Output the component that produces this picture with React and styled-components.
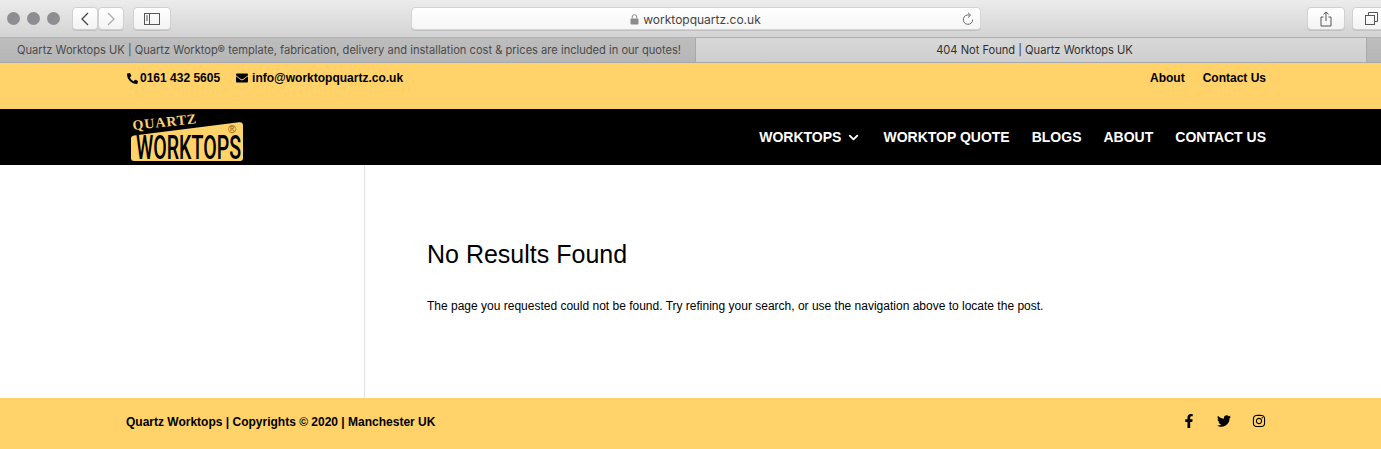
import styled, { createGlobalStyle } from "styled-components";
import { FaPhoneAlt, FaEnvelope, FaFacebookF, FaTwitter, FaInstagram } from "react-icons/fa";
import { FiChevronDown } from "react-icons/fi";

const GlobalStyle = createGlobalStyle`
  html, body {
    margin: 0;
    padding: 0;
    background: #fff;
    overflow: hidden;
    font-family: "Liberation Sans", Arial, sans-serif;
  }
`;

const Page = styled.div`
  width: 1381px;
  height: 449px;
  display: flex;
  flex-direction: column;
  overflow: hidden;
`;

const Toolbar = styled.div`
  height: 38px;
  flex: none;
  box-sizing: border-box;
  display: flex;
  align-items: center;
  padding: 0 0 0 7px;
  background: linear-gradient(#ececec, #d3d3d3);
  border-bottom: 1px solid #b1b1b1;
`;

const Lights = styled.div`
  display: flex;
  gap: 7px;
  margin-right: 12px;
`;

const Light = styled.span`
  width: 13px;
  height: 13px;
  border-radius: 50%;
  background: #8e8d92;
`;

const ToolButton = styled.button`
  width: ${(p) => p.$width}px;
  height: 23px;
  margin: 0 0 0 ${(p) => p.$gap || 0}px;
  padding: 0;
  flex: none;
  display: flex;
  align-items: center;
  justify-content: center;
  background: linear-gradient(#ffffff, #f3f3f3);
  border: 1px solid #d0d0d0;
  border-radius: 4px;
  box-shadow: 0 1px 0 #c0c0c0;
  color: #555;
`;

const AddressBar = styled.div`
  width: 570px;
  height: 23px;
  flex: none;
  margin-left: 240px;
  box-sizing: border-box;
  padding: 0 6px 0 0;
  display: grid;
  grid-template-columns: 1fr auto 1fr;
  align-items: center;
  background: linear-gradient(#ffffff, #f6f6f6);
  border: 1px solid #d4d4d4;
  border-radius: 4px;
  box-shadow: 0 1px 0 #c0c0c0;
`;

const Address = styled.span`
  grid-column: 2;
  display: flex;
  align-items: center;
  gap: 4px;
  padding: 2px 0 0 5px;
  font-family: "Inter", "Liberation Sans", sans-serif;
  font-size: 12px;
  color: #444;
`;

const Reload = styled.span`
  justify-self: end;
  display: flex;
`;

const TabBar = styled.div`
  height: 25px;
  flex: none;
  box-sizing: border-box;
  display: flex;
  border-bottom: 1px solid #a9a9a9;
  font-family: "Inter", "Liberation Sans", sans-serif;
  font-size: 11.12px;
`;

const Tab = styled.div`
  flex: 0 0 695px;
  box-sizing: border-box;
  display: flex;
  align-items: center;
  padding-left: 17px;
  white-space: nowrap;
  overflow: hidden;
  color: #4a4a4a;
  background: linear-gradient(#bdbdbd, #b6b6b6);
`;

const ActiveTab = styled(Tab)`
  flex: 0 0 672px;
  justify-content: center;
  padding-left: 7px;
  color: #303030;
  background: linear-gradient(#d8d8d8, #cfcfcf);
  border-left: 1px solid #a9a9a9;
  border-right: 1px solid #a9a9a9;
`;

const NewTab = styled(Tab)`
  flex: 1;
  padding: 0;
`;

const Inner = styled.div`
  width: 1140px;
  margin-left: 126px;
  display: flex;
  justify-content: space-between;
`;

const TopBar = styled.div`
  height: 46px;
  flex: none;
  box-sizing: border-box;
  padding-top: 8px;
  background: #ffd36a;
  color: #000;
  font-size: 12px;
  font-weight: 700;
`;

const Contacts = styled.div`
  display: flex;
  gap: 16px;
  padding-left: 1px;
`;

const ContactItem = styled.span`
  display: flex;
  align-items: center;
  gap: ${(p) => p.$gap}px;
  line-height: 15px;
`;

const MailIcon = styled(FaEnvelope)`
  margin-bottom: 2px;
`;

const TopLinks = styled.div`
  display: flex;
  gap: 18px;
  line-height: 14px;
`;

const Header = styled.header`
  height: 56px;
  flex: none;
  background: #000;
`;

const HeaderInner = styled(Inner)`
  height: 56px;
  align-items: center;
`;

const LogoMark = styled.svg`
  display: block;
  margin-left: 4px;
  overflow: visible;
`;

const Nav = styled.nav`
  display: flex;
  gap: 22px;
  color: #fff;
  font-size: 14px;
  font-weight: 700;
`;

const NavItem = styled.span`
  display: flex;
  align-items: center;
  gap: ${(p) => p.$gap || 0}px;
  white-space: nowrap;
`;

const Main = styled.main`
  flex: 1;
  display: flex;
  margin-left: 126px;
`;

const Sidebar = styled.aside`
  width: 239px;
  flex: none;
  box-sizing: border-box;
  border-right: 1px solid #e2e2e2;
`;

const Content = styled.section`
  padding: 73px 0 0 62px;
  color: #000;
`;

const Title = styled.h1`
  margin: 0;
  font-size: 25px;
  font-weight: 400;
  line-height: 33px;
`;

const Message = styled.p`
  margin: 27px 0 0;
  font-size: 12px;
  line-height: 16px;
`;

const Footer = styled.footer`
  height: 51px;
  flex: none;
  display: flex;
  align-items: center;
  background: #ffd36a;
  color: #000;
  font-size: 12px;
  font-weight: 700;
`;

const FooterInner = styled(Inner)`
  align-items: center;
  margin-top: -3px;
`;

const Socials = styled.div`
  display: flex;
  align-items: center;
  gap: 21px;
  padding-bottom: 2px;
  font-size: 14px;
`;

function Logo() {
  return (
    <LogoMark width="116" height="56" viewBox="0 0 116 56">
      <path
        d="M4 26.500 L109 13.200 Q113 12.800 113 16.500 L113 49 Q113 52 110 52 L4 52 Q1 52 1 49 L1 29.500 Q1 27 4 26.500 Z"
        fill="#ffd36a"
      />
      <text
        x="3"
        y="21"
        fill="#f7d175"
        fontFamily="'Liberation Serif', serif"
        fontSize="14"
        fontWeight="700"
        textLength="64"
        transform="rotate(-6 3 21)"
      >
        QUARTZ
      </text>
      <text
        x="6"
        y="50"
        fill="#000"
        fontFamily="'Roboto', 'Liberation Sans', sans-serif"
        fontSize="33"
        fontWeight="500"
        textLength="105"
        lengthAdjust="spacingAndGlyphs"
      >
        WORKTOPS
      </text>
      <text x="98" y="24" fill="#7a5a10" fontFamily="'Liberation Sans', sans-serif" fontSize="11">
        ®
      </text>
    </LogoMark>
  );
}

export default function App() {
  return (
    <Page>
      <GlobalStyle />
      <Toolbar>
        <Lights>
          <Light />
          <Light />
          <Light />
        </Lights>
        <ToolButton $width={26}>
          <svg width="10" height="14" viewBox="0 0 10 14" fill="none" stroke="#444" strokeWidth="1.300">
            <path d="M8 1 L2 7 L8 13" />
          </svg>
        </ToolButton>
        <ToolButton $width={26}>
          <svg width="10" height="14" viewBox="0 0 10 14" fill="none" stroke="#aaa" strokeWidth="1.300">
            <path d="M2 1 L8 7 L2 13" />
          </svg>
        </ToolButton>
        <ToolButton $width={38} $gap={9}>
          <svg width="16" height="12" viewBox="0 0 16 12" fill="none" stroke="#555">
            <rect x="0.500" y="0.500" width="15" height="11" />
            <path d="M5.500 0.500 V11.500 M2 3 H4 M2 5 H4 M2 7 H4" />
          </svg>
        </ToolButton>
        <AddressBar>
          <Address>
            <svg width="9" height="11" viewBox="0 0 9 11">
              <rect x="0.500" y="4.500" width="8" height="6" rx="1" fill="#8c8c8c" />
              <path d="M2.200 4.500 V3 a2.300 2.300 0 0 1 4.600 0 V4.500" fill="none" stroke="#8c8c8c" />
            </svg>
            worktopquartz.co.uk
          </Address>
          <Reload>
            <svg width="12" height="14" viewBox="0 0 12 14" fill="none" stroke="#666">
              <path d="M7.500 3.200 A4.700 4.700 0 1 0 10.700 7.500" />
              <path d="M6 0.800 L8.600 3.200 L6 5.600" />
            </svg>
          </Reload>
        </AddressBar>
        <ToolButton $width={38} $gap={326}>
          <svg width="12" height="16" viewBox="0 0 12 16" fill="none" stroke="#555">
            <path d="M3.500 6 H1 V15 H11 V6 H8.500 M6 10 V1 M3.500 3.300 L6 1 L8.500 3.300" />
          </svg>
        </ToolButton>
        <ToolButton $width={38} $gap={7}>
          <svg width="13" height="13" viewBox="0 0 13 13" fill="none" stroke="#555">
            <rect x="0.500" y="3.500" width="9" height="9" />
            <path d="M3.500 3.500 V0.500 H12.500 V9.500 H9.500" />
          </svg>
        </ToolButton>
      </Toolbar>
      <TabBar>
        <Tab>Quartz Worktops UK | Quartz Worktop® template, fabrication, delivery and installation cost &amp; prices are included in our quotes!</Tab>
        <ActiveTab>404 Not Found | Quartz Worktops UK</ActiveTab>
        <NewTab />
      </TabBar>
      <TopBar>
        <Inner>
          <Contacts>
            <ContactItem $gap={2}>
              <FaPhoneAlt size={11} />
              0161 432 5605
            </ContactItem>
            <ContactItem $gap={4}>
              <MailIcon size={12} />
              info@worktopquartz.co.uk
            </ContactItem>
          </Contacts>
          <TopLinks>
            <span>About</span>
            <span>Contact Us</span>
          </TopLinks>
        </Inner>
      </TopBar>
      <Header>
        <HeaderInner>
          <Logo />
          <Nav>
            <NavItem $gap={5}>
              WORKTOPS
              <FiChevronDown size={15} strokeWidth={3} />
            </NavItem>
            <NavItem>WORKTOP QUOTE</NavItem>
            <NavItem>BLOGS</NavItem>
            <NavItem>ABOUT</NavItem>
            <NavItem>CONTACT US</NavItem>
          </Nav>
        </HeaderInner>
      </Header>
      <Main>
        <Sidebar />
        <Content>
          <Title>No Results Found</Title>
          <Message>
            The page you requested could not be found. Try refining your search, or use the navigation above to locate the post.
          </Message>
        </Content>
      </Main>
      <Footer>
        <FooterInner>
          <span>Quartz Worktops | Copyrights © 2020 | Manchester UK</span>
          <Socials>
            <FaFacebookF />
            <FaTwitter />
            <FaInstagram />
          </Socials>
        </FooterInner>
      </Footer>
    </Page>
  );
}
